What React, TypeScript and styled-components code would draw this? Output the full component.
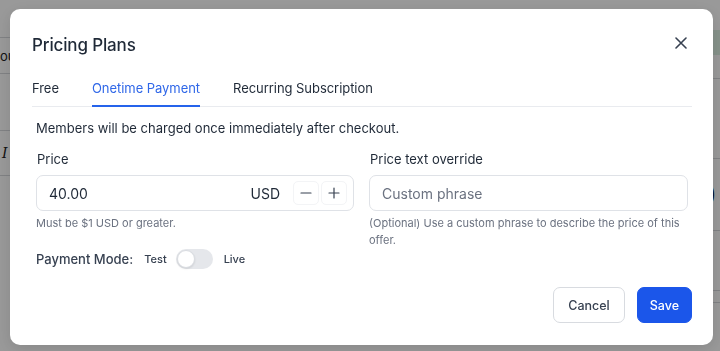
import React from "react";
import styled, { createGlobalStyle } from "styled-components";

const Global = createGlobalStyle`
  html, body { margin: 0; padding: 0; }
  body {
    width: 720px;
    height: 351px;
    overflow: hidden;
    font-family: Inter, "Noto Sans", "Liberation Sans", sans-serif;
    -webkit-font-smoothing: antialiased;
  }
  * { box-sizing: border-box; }
`;

/* ---------- background page ---------- */
const Page = styled.div`
  width: 720px;
  height: 351px;
  background: #ffffff;
  display: flex;
  justify-content: space-between;
`;

const SideStrip = styled.div`
  width: 40px;
  display: flex;
  flex-direction: column;
  padding-top: 37px;
`;

const StripRow = styled.div<{ $h: number; $line?: boolean }>`
  height: ${(p) => p.$h}px;
  border-top: ${(p) => (p.$line ? "1px solid #d6d8dc" : "none")};
  display: flex;
  align-items: center;
  font-size: 13px;
  color: #222;
  overflow: hidden;
  white-space: nowrap;
`;

const ItalicI = styled.span`
  font-family: "DejaVu Serif", serif;
  font-style: italic;
  font-size: 14px;
  padding-left: 2px;
`;

const RightStrip = styled.div`
  width: 30px;
  display: flex;
  flex-direction: column;
  padding-top: 30px;
`;

const GreenBox = styled.div`
  height: 25px;
  background: #dff3e6;
  margin-left: 8px;
`;

const BigDigit = styled.span`
  font-size: 28px;
  color: #111;
  padding-left: 8px;
`;

const SmallText = styled.span`
  font-size: 13px;
  color: #222;
  padding-left: 8px;
`;

const Overlay = styled.div`
  position: fixed;
  inset: 0;
  background: rgba(0, 0, 0, 0.4);
  padding: 9px 7px 6px 10px;
`;

/* ---------- modal ---------- */
const Modal = styled.div`
  width: 703px;
  height: 336px;
  background: #fff;
  border-radius: 10px;
  padding: 24px 21px 22px 22px;
  display: flex;
  flex-direction: column;
  box-shadow: 0 4px 16px rgba(0, 0, 0, 0.12);
`;

const Header = styled.div`
  display: flex;
  align-items: center;
  justify-content: space-between;
  height: 24px;
`;

const Title = styled.h2`
  margin: 0;
  font-size: 17px;
  font-weight: 500;
  color: #1f2937;
  letter-spacing: -0.15px;
`;

const CloseBtn = styled.button`
  border: none;
  background: none;
  padding: 0;
  width: 24px;
  height: 24px;
  margin-right: -1px;
  margin-top: -4px;
  display: flex;
  align-items: center;
  justify-content: center;
  color: #374151;
  cursor: pointer;
`;

const Tabs = styled.div`
  display: flex;
  gap: 33px;
  margin-top: 21px;
  border-bottom: 1px solid #e9ebef;
`;

const Tab = styled.div<{ $active?: boolean }>`
  font-size: 13px;
  line-height: 20px;
  padding: 0 0 7px;
  margin-bottom: -1px;
  border-bottom: 2px solid ${(p) => (p.$active ? "#2563eb" : "transparent")};
  color: ${(p) => (p.$active ? "#2f67e8" : "#1f2937")};
  white-space: nowrap;
  letter-spacing: -0.05px;
`;

const Panel = styled.div`
  padding: 0 4px;
  display: flex;
  flex-direction: column;
`;

const Intro = styled.p`
  margin: 11px 0 0;
  font-size: 13px;
  line-height: 20px;
  color: #1f2937;
`;

const Fields = styled.div`
  display: grid;
  grid-template-columns: 318px 319px;
  column-gap: 15px;
  margin-top: 11px;
`;

const Field = styled.div`
  display: flex;
  flex-direction: column;
`;

const Label = styled.label`
  font-size: 13px;
  line-height: 20px;
  color: #1f2937;
  padding-left: 1px;
  margin-bottom: 6px;
`;

const InputBox = styled.div`
  height: 36px;
  border: 1px solid #dfe2e7;
  border-radius: 7px;
  display: flex;
  align-items: center;
  padding: 0 6px 0 12px;
  background: #fff;
`;

const Value = styled.span`
  flex: 1;
  font-size: 14px;
  color: #1f2937;
`;

const Placeholder = styled.span`
  flex: 1;
  font-size: 14px;
  color: #6b7280;
`;

const Currency = styled.span`
  font-size: 14px;
  color: #1f2937;
  margin-right: 11px;
`;

const StepBtn = styled.button`
  width: 26px;
  height: 24px;
  border: 1px solid #f3f4f6;
  border-radius: 5px;
  background: #fff;
  display: flex;
  align-items: center;
  justify-content: center;
  padding: 0;
  color: #374151;
  margin-left: 2px;
`;

const Help = styled.p`
  margin: 4px 0 0;
  font-size: 11px;
  line-height: 17px;
  color: #6b7280;
`;

const ModeRow = styled.div`
  display: flex;
  align-items: center;
  margin-top: 0;
  height: 20px;
`;

const ModeLabel = styled.span`
  font-size: 13px;
  font-weight: 500;
  color: #374151;
  margin-right: 11px;
`;

const ModeOpt = styled.span`
  font-size: 11px;
  font-weight: 500;
  color: #374151;
`;

const Switch = styled.div`
  width: 37px;
  height: 20px;
  border-radius: 10px;
  background: #e5e7eb;
  margin: 0 11px 0 9px;
  display: flex;
  align-items: center;
  padding: 1px;
`;

const Knob = styled.div`
  width: 18px;
  height: 18px;
  border-radius: 50%;
  background: #fff;
  border: 1px solid #d9dce1;
  box-shadow: 0 1px 2px rgba(0, 0, 0, 0.1);
`;

const Footer = styled.div`
  margin-top: auto;
  display: flex;
  justify-content: flex-end;
  gap: 12px;
`;

const Button = styled.button<{ $primary?: boolean }>`
  height: 36px;
  padding: 0 ${(p) => (p.$primary ? 12 : 14)}px;
  border-radius: 7px;
  font-family: inherit;
  font-size: 12.5px;
  font-weight: 500;
  border: 1px solid ${(p) => (p.$primary ? "#1b56ea" : "#d8dbe0")};
  background: ${(p) => (p.$primary ? "#1b56ea" : "#fff")};
  color: ${(p) => (p.$primary ? "#fff" : "#374151")};
  cursor: pointer;
`;

const XIcon = () => (
  <svg width="12" height="12" viewBox="0 0 12 12" fill="none">
    <path d="M1 1L11 11M11 1L1 11" stroke="currentColor" strokeWidth="1.6" strokeLinecap="round" />
  </svg>
);

const Minus = () => (
  <svg width="12" height="12" viewBox="0 0 12 12" fill="none">
    <path d="M1 6H11" stroke="currentColor" strokeWidth="1.2" strokeLinecap="round" />
  </svg>
);

const Plus = () => (
  <svg width="12" height="12" viewBox="0 0 12 12" fill="none">
    <path d="M1 6H11M6 1V11" stroke="currentColor" strokeWidth="1.2" strokeLinecap="round" />
  </svg>
);

export default function App() {
  return (
    <>
      <Global />
      <Page>
        <SideStrip>
          <StripRow $h={36} $line>
            ou
          </StripRow>
          <StripRow $h={57} $line />
          <StripRow $h={45} $line>
            <ItalicI>I</ItalicI>
          </StripRow>
          <StripRow $h={40} $line />
        </SideStrip>
        <RightStrip>
          <GreenBox />
          <StripRow $h={23} />
          <StripRow $h={80} $line>
            <SmallText>P</SmallText>
          </StripRow>
          <StripRow $h={72} $line>
            <BigDigit>0</BigDigit>
          </StripRow>
          <StripRow $h={60} $line>
            <SmallText>h</SmallText>
          </StripRow>
          <StripRow $h={12} $line />
          <StripRow $h={40} $line />
        </RightStrip>
      </Page>
      <Overlay>
        <Modal>
          <Header>
            <Title>Pricing Plans</Title>
            <CloseBtn aria-label="Close">
              <XIcon />
            </CloseBtn>
          </Header>
          <Tabs>
            <Tab>Free</Tab>
            <Tab $active>Onetime Payment</Tab>
            <Tab>Recurring Subscription</Tab>
          </Tabs>
          <Panel>
            <Intro>Members will be charged once immediately after checkout.</Intro>
            <Fields>
              <Field>
                <Label>Price</Label>
                <InputBox>
                  <Value>40.00</Value>
                  <Currency>USD</Currency>
                  <StepBtn aria-label="Decrease">
                    <Minus />
                  </StepBtn>
                  <StepBtn aria-label="Increase">
                    <Plus />
                  </StepBtn>
                </InputBox>
                <Help>Must be $1 USD or greater.</Help>
              </Field>
              <Field>
                <Label>Price text override</Label>
                <InputBox>
                  <Placeholder>Custom phrase</Placeholder>
                </InputBox>
                <Help>(Optional) Use a custom phrase to describe the price of this offer.</Help>
              </Field>
            </Fields>
            <ModeRow>
              <ModeLabel>Payment Mode:</ModeLabel>
              <ModeOpt>Test</ModeOpt>
              <Switch>
                <Knob />
              </Switch>
              <ModeOpt>Live</ModeOpt>
            </ModeRow>
          </Panel>
          <Footer>
            <Button>Cancel</Button>
            <Button $primary>Save</Button>
          </Footer>
        </Modal>
      </Overlay>
    </>
  );
}
